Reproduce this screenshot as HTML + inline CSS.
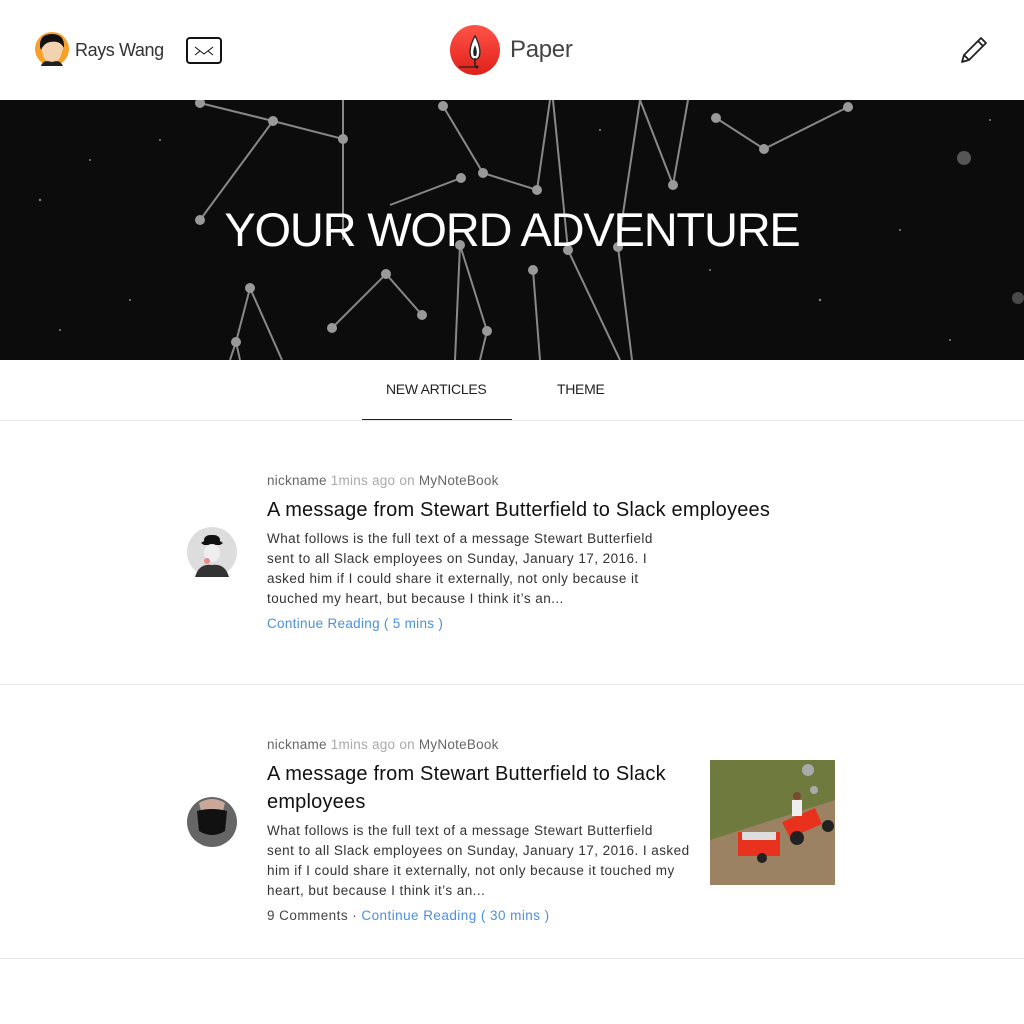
<!DOCTYPE html>
<html><head><meta charset="utf-8"><style>
*{margin:0;padding:0;box-sizing:border-box}
body{width:1024px;height:1024px;background:#fff;font-family:"Liberation Sans",sans-serif;position:relative;overflow:hidden;color:#222}
.a{position:absolute;white-space:nowrap}
.meta{font-size:13.5px;color:#666;letter-spacing:0.25px}
.meta .l{color:#aaa}
.t{font-size:20px;color:#111;letter-spacing:0.2px;line-height:28px}
.b{font-size:13.5px;color:#333;line-height:20px;letter-spacing:0.45px}
.c{font-size:13.5px;color:#4a90e2;letter-spacing:0.3px}
</style></head><body>
<svg class="a" style="left:35px;top:32px" width="34" height="34" viewBox="0 0 34 34"><circle cx="17" cy="17" r="17" fill="#f7a12b"/><path d="M5 14 Q6 3 17 3 Q29 3 29 14 L27 20 Q25 30 17 31 Q9 30 8 22 Z" fill="#f3d2b0"/><path d="M5 15 Q4 2 17 2 Q30 2 29 16 Q25 8 15 10 Q9 11 6 18Z" fill="#111"/><path d="M6 34 Q8 27 17 30 Q25 27 28 34Z" fill="#222"/></svg>
<div class="a" style="left:75px;top:40px;font-size:18px;color:#333;letter-spacing:-0.4px">Rays Wang</div>
<svg class="a" style="left:186px;top:37px" width="36" height="27" viewBox="0 0 36 27"><rect x="1" y="1" width="34" height="25" rx="3" fill="none" stroke="#111" stroke-width="2"/><path d="M9 10 L18 17 L27 10 M9 18 L14 14 M27 18 L22 14" fill="none" stroke="#111" stroke-width="1"/></svg>
<svg class="a" style="left:450px;top:25px" width="50" height="50" viewBox="0 0 50 50"><defs><linearGradient id="g" x1="0" y1="0" x2="0" y2="1"><stop offset="0" stop-color="#ff5447"/><stop offset="1" stop-color="#e0201b"/></linearGradient></defs><circle cx="25" cy="25" r="25" fill="url(#g)"/><path d="M25 11 Q18 24 21 32 Q25 37 29 32 Q32 24 25 11Z" fill="#fff" stroke="#222" stroke-width="1.3"/><path d="M25 20 Q22 27 24 31 L26 31 Q28 27 25 20Z" fill="#222"/><line x1="25" y1="33" x2="25" y2="42" stroke="#222" stroke-width="1.5"/><line x1="9" y1="42" x2="27" y2="42" stroke="#222" stroke-width="1.3"/><circle cx="27" cy="42" r="1.5" fill="#222"/></svg>
<div class="a" style="left:510px;top:36px;font-size:24px;color:#444;letter-spacing:-0.3px">Paper</div>
<svg class="a" style="left:958px;top:34px" width="32" height="32" viewBox="0 0 32 32"><path d="M4 28 L6 21 L23 4 L28 9 L11 26 Z M6 21 L11 26 M20 7 L25 12 M4 28 L7 27" fill="none" stroke="#222" stroke-width="1.8" stroke-linejoin="round"/></svg>
<div class="a" style="left:0;top:100px;width:1024px;height:260px;background:#0c0c0c;overflow:hidden">
<svg width="1024" height="260" viewBox="0 100 1024 260" style="position:absolute;left:0;top:0">
<g fill="#fff" opacity="0.5"><circle cx="964" cy="158" r="7" opacity="0.6"/><circle cx="1018" cy="298" r="6" opacity="0.5"/><circle cx="90" cy="160" r="1"/><circle cx="40" cy="200" r="1.2"/><circle cx="130" cy="300" r="1"/><circle cx="900" cy="230" r="1"/><circle cx="820" cy="300" r="1.2"/><circle cx="600" cy="130" r="1"/><circle cx="990" cy="120" r="1"/><circle cx="60" cy="330" r="1"/><circle cx="710" cy="270" r="1"/><circle cx="160" cy="140" r="1"/><circle cx="950" cy="340" r="1"/></g>
<g stroke="#888" stroke-width="2" fill="none">
<path d="M200 103 L273 121 L343 139 L343 100 M273 121 L200 220 M343 139 L343 240 M443 106 L483 173 L537 190 L550 100 M461 178 L390 205 M640 100 L673 185 L688 100 M716 118 L764 149 L848 107 M332 328 L386 274 L422 315 M250 288 L282 360 M250 288 L236 342 L230 360 M460 245 L455 360 M460 245 L487 331 L480 360 M533 270 L540 360 M568 250 L620 360 M568 250 L553 100 M618 247 L640 100 M618 247 L632 360 M236 342 L240 360"/></g>
<g fill="#999"><circle cx="200" cy="103" r="5"/><circle cx="273" cy="121" r="5"/><circle cx="343" cy="139" r="5"/><circle cx="200" cy="220" r="5"/><circle cx="443" cy="106" r="5"/><circle cx="483" cy="173" r="5"/><circle cx="461" cy="178" r="5"/><circle cx="537" cy="190" r="5"/><circle cx="673" cy="185" r="5"/><circle cx="716" cy="118" r="5"/><circle cx="764" cy="149" r="5"/><circle cx="848" cy="107" r="5"/><circle cx="386" cy="274" r="5"/><circle cx="422" cy="315" r="5"/><circle cx="332" cy="328" r="5"/><circle cx="250" cy="288" r="5"/><circle cx="236" cy="342" r="5"/><circle cx="487" cy="331" r="5"/><circle cx="533" cy="270" r="5"/><circle cx="568" cy="250" r="5"/><circle cx="618" cy="247" r="5"/><circle cx="460" cy="245" r="5"/></g>
</svg>
<div style="position:absolute;left:0;width:1024px;top:102px;text-align:center;font-size:47px;color:#fff;letter-spacing:-1.2px;font-weight:300">YOUR WORD ADVENTURE</div>
</div>
<div class="a" style="left:386px;top:381px;font-size:14px;color:#222;letter-spacing:-0.3px">NEW ARTICLES</div>
<div class="a" style="left:557px;top:381px;font-size:14px;color:#222;letter-spacing:-0.3px">THEME</div>
<div class="a" style="left:362px;top:419px;width:150px;height:2px;background:#222"></div>
<div class="a" style="left:0;top:420px;width:1024px;height:1px;background:#e8e8e8"></div>
<svg class="a" style="left:187px;top:527px" width="50" height="50" viewBox="0 0 50 50"><circle cx="25" cy="25" r="25" fill="#ddd"/><path d="M14 16 Q25 8 36 16 L33 18 L17 18Z" fill="#111"/><rect x="17" y="8" width="16" height="10" rx="6" fill="#111"/><ellipse cx="25" cy="26" rx="8" ry="9" fill="#eee"/><path d="M8 50 Q12 36 25 38 Q38 36 42 50Z" fill="#333"/><circle cx="20" cy="34" r="3" fill="#e88"/></svg>
<div class="a meta" style="left:267px;top:473px">nickname <span class="l">1mins ago on</span> MyNoteBook</div>
<div class="a t" style="left:267px;top:496px">A message from Stewart Butterfield to Slack employees</div>
<div class="a b" style="left:267px;top:529px">What follows is the full text of a message Stewart Butterfield<br>sent to all Slack employees on Sunday, January 17, 2016. I<br>asked him if I could share it externally, not only because it<br>touched my heart, but because I think it’s an...</div>
<div class="a c" style="left:267px;top:616px">Continue Reading ( 5 mins )</div>
<div class="a" style="left:0;top:684px;width:1024px;height:1px;background:#e8e8e8"></div>
<svg class="a" style="left:187px;top:797px" width="50" height="50" viewBox="0 0 50 50"><circle cx="25" cy="25" r="25" fill="#666"/><path d="M12 6 Q25 -2 38 6 L36 14 L14 14Z" fill="#c9a89a"/><path d="M10 14 Q25 10 40 14 L38 34 Q25 42 12 34Z" fill="#111"/></svg>
<div class="a meta" style="left:267px;top:737px">nickname <span class="l">1mins ago on</span> MyNoteBook</div>
<div class="a t" style="left:267px;top:760px">A message from Stewart Butterfield to Slack<br>employees</div>
<div class="a b" style="left:267px;top:821px">What follows is the full text of a message Stewart Butterfield<br>sent to all Slack employees on Sunday, January 17, 2016. I asked<br>him if I could share it externally, not only because it touched my<br>heart, but because I think it’s an...</div>
<div class="a" style="left:267px;top:908px;font-size:13.5px;color:#444;letter-spacing:0.45px">9 Comments · <span style="color:#4a90e2">Continue Reading ( 30 mins )</span></div>
<svg class="a" style="left:710px;top:760px" width="125" height="125" viewBox="0 0 125 125"><rect width="125" height="125" fill="#6f7a3f"/><path d="M0 80 L125 40 L125 125 L0 125Z" fill="#9b8262"/><circle cx="98" cy="10" r="6" fill="#aaa"/><circle cx="104" cy="30" r="4" fill="#aaa"/><rect x="28" y="72" width="42" height="24" fill="#e8321e"/><rect x="32" y="72" width="34" height="8" fill="#ddd"/><path d="M72 62 L105 48 L112 64 L80 78Z" fill="#e8321e"/><circle cx="87" cy="78" r="7" fill="#222"/><circle cx="118" cy="66" r="6" fill="#222"/><circle cx="52" cy="98" r="5" fill="#222"/><rect x="82" y="40" width="10" height="16" fill="#eee"/><circle cx="87" cy="36" r="4" fill="#7a4a30"/></svg>
<div class="a" style="left:0;top:958px;width:1024px;height:1px;background:#e8e8e8"></div>
</body></html>
